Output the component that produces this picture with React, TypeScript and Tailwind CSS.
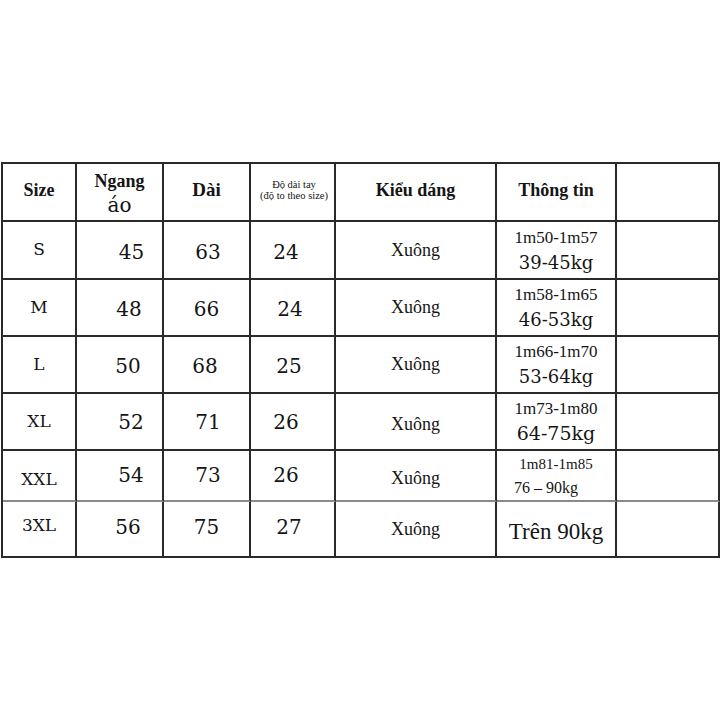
const serif = "font-['Liberation_Serif','Times_New_Roman',serif]";
const deja = "font-['DejaVu_Serif',serif]";

type Row = {
  size: string;
  ngang: string;
  dai: string;
  tay: string;
  info: React.ReactNode;
  nOff: string;
  dOff: string;
  tOff: string;
  last?: boolean;
  grey?: boolean;
};

const rows: Row[] = [
  {
    size: "S", ngang: "45", dai: "63", tay: "24", nOff: "pl-[24px] pt-[3px]", dOff: "pl-[3px] pt-[3px]", tOff: "pr-[13px] pt-[3px]",
    info: (<><span className={`${serif} text-[17px] leading-[24px]`}>1m50-1m57</span><span className={`${deja} text-[18px] leading-[25px]`}>39-45kg</span></>),
  },
  {
    size: "M", ngang: "48", dai: "66", tay: "24", nOff: "pl-[19px] pt-[2px]", dOff: "pt-[2px]", tOff: "pr-[5px] pt-[2px]",
    info: (<><span className={`${serif} text-[17px] leading-[24px]`}>1m58-1m65</span><span className={`${deja} text-[18px] leading-[25px]`}>46-53kg</span></>),
  },
  {
    size: "L", ngang: "50", dai: "68", tay: "25", nOff: "pl-[17px] pt-[2px]", dOff: "pr-[3px] pt-[2px]", tOff: "pr-[7px] pt-[2px]",
    info: (<><span className={`${serif} text-[17px] leading-[24px]`}>1m66-1m70</span><span className={`${deja} text-[18px] leading-[25px]`}>53-64kg</span></>),
  },
  {
    size: "XL", ngang: "52", dai: "71", tay: "26", nOff: "pl-[23px]", dOff: "pl-[3px]", tOff: "pr-[13px]",
    info: (<><span className={`${serif} text-[17px] leading-[24px]`}>1m73-1m80</span><span className={`${deja} text-[19px] leading-[25px]`}>64-75kg</span></>),
  },
  {
    size: "XXL", ngang: "54", dai: "73", tay: "26", nOff: "pl-[23px] pb-[2px]", dOff: "pl-[3px] pb-[2px]", tOff: "pr-[13px] pb-[2px]", grey: true,
    info: (<><span className={`${serif} text-[15px] leading-[24px]`}>1m81-1m85</span><span className={`${serif} text-[16px] leading-[24px] pr-[20px]`}>76 – 90kg</span></>),
  },
  {
    size: "3XL", ngang: "56", dai: "75", tay: "27", nOff: "pl-[17px] pb-[5px]", dOff: "pb-[5px]", tOff: "pr-[7px] pb-[5px]", last: true,
    info: (<span className={`${serif} text-[23px] leading-[28px] pt-[6px]`}>Trên 90kg</span>),
  },
];

function Cell({ children, className = "", grey }: { children?: React.ReactNode; className?: string; grey?: boolean }) {
  return (
    <div className={`flex flex-col items-center justify-center border-r-2 border-b-2 ${grey ? "border-b-[#8a8a8a] border-r-[#2a2a2a]" : "border-[#2a2a2a]"} ${className}`}>
      {children}
    </div>
  );
}

export default function App() {
  return (
    <div className="w-[723px] h-[723px] bg-white pt-[162px] pl-[1px] text-[#151515]">
      <div className="grid grid-cols-[74px_87px_87px_85px_161px_120px_103px] grid-rows-[58px_58px_57px_57px_57px_51px_56px] w-fit border-l-2 border-t-2 border-[#2a2a2a]">
        {/* header */}
        <Cell className={`${serif} font-bold text-[18px] pb-[4px]`}>Size</Cell>
        <Cell className="pt-[3px]">
          <span className={`${serif} font-bold text-[18px] leading-[22px]`}>Ngang</span>
          <span className={`${deja} text-[20px] leading-[26px]`}>áo</span>
        </Cell>
        <Cell className={`${serif} font-bold text-[19px] pb-[4px]`}>Dài</Cell>
        <Cell className={`${serif} text-[10.5px] leading-[11px] pb-[4px] pl-[3px]`}>
          <span>Độ dài tay</span>
          <span>(độ to theo size)</span>
        </Cell>
        <Cell className={`${serif} font-bold text-[18px] pb-[4px]`}>Kiểu dáng</Cell>
        <Cell className={`${serif} font-bold text-[18px] pb-[4px]`}>Thông tin</Cell>
        <Cell />

        {rows.map((r) => (
          <div key={r.size} className="contents">
            <Cell grey={r.grey} className={`${deja} text-[17px] ${r.grey ? "pt-[8px]" : ""} ${r.last ? "pb-[6px]" : ""}`}>{r.size}</Cell>
            <Cell grey={r.grey} className={`${deja} text-[20px] ${r.nOff}`}>{r.ngang}</Cell>
            <Cell grey={r.grey} className={`${deja} text-[20px] ${r.dOff}`}>{r.dai}</Cell>
            <Cell grey={r.grey} className={`${deja} text-[20px] ${r.tOff}`}>{r.tay}</Cell>
            <Cell grey={r.grey} className={`${serif} text-[18px] ${r.size === "XL" || r.grey ? "pt-[5px]" : ""}`}>Xuông</Cell>
            <Cell grey={r.grey}>{r.info}</Cell>
            <Cell grey={r.grey} />
          </div>
        ))}
      </div>
    </div>
  );
}
